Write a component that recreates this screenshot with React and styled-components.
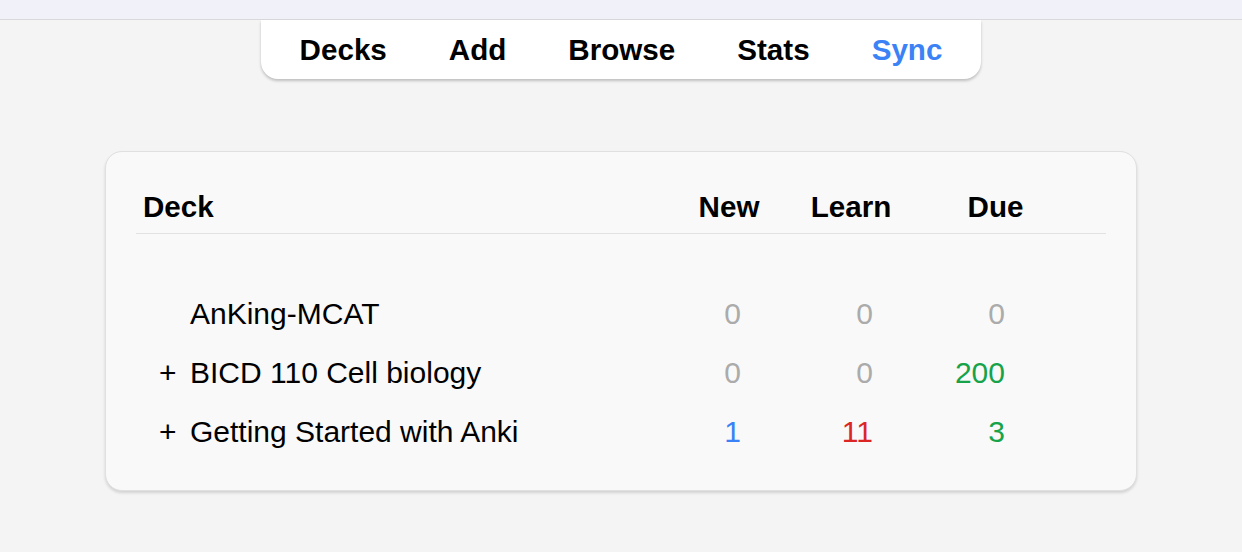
import React from "react";
import styled, { createGlobalStyle } from "styled-components";

const Global = createGlobalStyle`
  html, body { margin: 0; padding: 0; background: #f4f4f4; }
  body { font-family: "Liberation Sans", Arial, Helvetica, sans-serif; color: #000; }
  * { box-sizing: border-box; }
`;

const Page = styled.div`
  display: flex;
  flex-direction: column;
  align-items: center;
  min-height: 552px;
`;

const TitleStrip = styled.div`
  align-self: stretch;
  height: 20px;
  background: #f1f1f9;
  border-bottom: 1px solid #d9d9dc;
`;

const Toolbar = styled.nav`
  display: flex;
  gap: 62px;
  padding: 13px 39px;
  background: #ffffff;
  border-radius: 0 0 17px 17px;
  box-shadow: 0 2px 3px rgba(0, 0, 0, 0.22);
`;

const NavItem = styled.a`
  font-size: 29.6px;
  line-height: 33px;
  font-weight: 700;
  color: ${(p) => (p.$active ? "#3b82f6" : "#000")};
  text-decoration: none;
  cursor: pointer;
`;

const Card = styled.section`
  margin-top: 72px;
  width: 1032px;
  padding: 38px 30px 29px;
  background: #f9f9f9;
  border: 1px solid #e0e0e0;
  border-radius: 17px;
  box-shadow: 0 2px 3px rgba(0, 0, 0, 0.14);
`;

const cols = "545px 96px 148px 141px 1fr";

const HeaderRow = styled.div`
  display: grid;
  grid-template-columns: ${cols};
  padding-bottom: 10px;
  border-bottom: 1px solid #e2e2e2;
  margin-bottom: 50px;
`;

const HeadCell = styled.div`
  font-size: 29.6px;
  line-height: 33px;
  font-weight: 700;
  text-align: ${(p) => (p.$left ? "left" : "center")};
  padding-left: ${(p) => (p.$left ? "7px" : "0")};
`;

const Row = styled.div`
  display: grid;
  grid-template-columns: ${cols};
  padding: 13px 0;
`;

const DeckCell = styled.div`
  display: flex;
  padding-left: 23px;
  font-size: 30px;
  line-height: 33px;
`;

const Expander = styled.span`
  width: 31px;
  flex: none;
`;

const CountCell = styled.div`
  font-size: 30px;
  line-height: 33px;
  text-align: right;
  padding-right: ${(p) => p.$pad}px;
  color: ${(p) => p.$color};
`;

const colours = {
  new: "#3b82f6",
  learn: "#dc2626",
  due: "#16a34a",
  zero: "#ababab",
};

const decks = [
  { name: "AnKing-MCAT", expand: false, n: 0, l: 0, d: 0 },
  { name: "BICD 110 Cell biology", expand: true, n: 0, l: 0, d: 200 },
  { name: "Getting Started with Anki", expand: true, n: 1, l: 11, d: 3 },
];

const c = (v, col) => (v === 0 ? colours.zero : col);

export default function App() {
  return (
    <Page>
      <Global />
      <TitleStrip />
      <Toolbar>
        <NavItem>Decks</NavItem>
        <NavItem>Add</NavItem>
        <NavItem>Browse</NavItem>
        <NavItem>Stats</NavItem>
        <NavItem $active>Sync</NavItem>
      </Toolbar>
      <Card>
        <HeaderRow>
          <HeadCell $left>Deck</HeadCell>
          <HeadCell>New</HeadCell>
          <HeadCell>Learn</HeadCell>
          <HeadCell>Due</HeadCell>
          <div />
        </HeaderRow>
        {decks.map((dk) => (
          <Row key={dk.name}>
            <DeckCell>
              <Expander>{dk.expand ? "+" : ""}</Expander>
              <span>{dk.name}</span>
            </DeckCell>
            <CountCell $pad={36} $color={c(dk.n, colours.new)}>{dk.n}</CountCell>
            <CountCell $pad={52} $color={c(dk.l, colours.learn)}>{dk.l}</CountCell>
            <CountCell $pad={61} $color={c(dk.d, colours.due)}>{dk.d}</CountCell>
            <div />
          </Row>
        ))}
      </Card>
    </Page>
  );
}
